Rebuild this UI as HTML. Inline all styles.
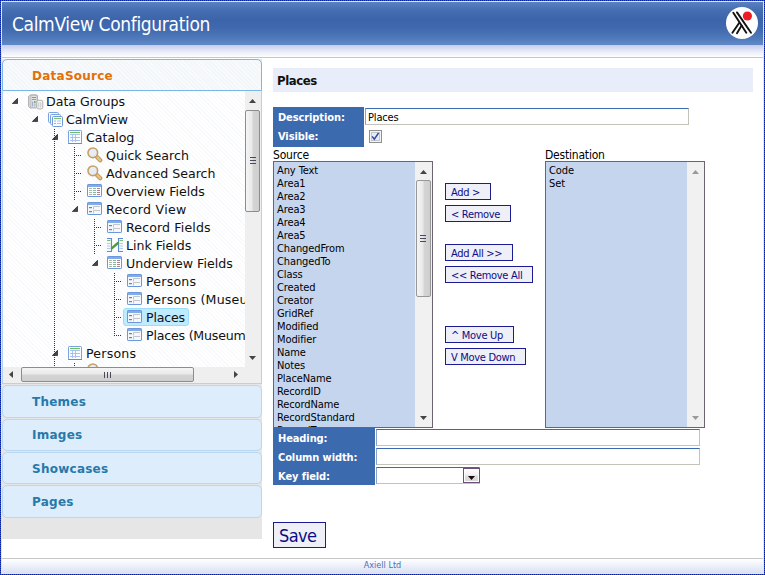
<!DOCTYPE html>
<html><head><meta charset="utf-8"><title>CalmView Configuration</title>
<style>
html,body{margin:0;padding:0;}
body{width:765px;height:575px;position:relative;overflow:hidden;background:#fff;font-family:"DejaVu Sans Condensed","Liberation Sans",sans-serif;font-size:11px;color:#000;}
.abs{position:absolute;}
#fT,#fB{position:absolute;left:0;width:765px;height:1px;background:repeating-linear-gradient(90deg,#0422a0 0,#0422a0 1px,#386a5c 1px,#386a5c 2px);}
#fT{top:0}#fB{top:574px}
#fL,#fR{position:absolute;top:0;width:1px;height:575px;background:repeating-linear-gradient(180deg,#0422a0 0,#0422a0 1px,#386a5c 1px,#386a5c 2px);}
#fL{left:0}#fR{left:764px}
#gT,#gB{position:absolute;left:1px;width:763px;height:1px;background:#e8e6de;}
#gT{top:1px}#gB{top:573px}
#gL,#gR{position:absolute;top:1px;width:1px;height:573px;background:#e8e6de;}
#gL{left:1px}#gR{left:763px}
#hdr{position:absolute;left:2px;top:2px;width:761px;height:43px;background:linear-gradient(180deg,#5a82bf 0%,#466eb2 18%,#3b64aa 42%,#3f68ae 60%,#4f79ba 84%,#5f89c6 100%);}
#title{position:absolute;left:10px;top:10px;color:#fff;font-size:19px;line-height:24px;letter-spacing:-0.35px;white-space:nowrap;}
#sub{position:absolute;left:2px;top:45px;width:761px;height:12px;background:linear-gradient(180deg,#c4cceb 0%,#e6e9f7 50%,#ffffff 100%);}
#subline{position:absolute;left:2px;top:57px;width:761px;height:1px;background:#c6c6c6;}
#left{position:absolute;left:2px;top:58px;width:260px;height:481px;background:linear-gradient(180deg,#fff 0,#fff 1px,#e6e6e6 1px,#e6e6e6 100%);}
.acc{position:absolute;left:0;width:258px;height:30px;border:1px solid #bbd7f0;background:#ddedfb;border-radius:5px;color:#2779aa;font-family:"DejaVu Sans","Liberation Sans",sans-serif;font-weight:bold;font-size:12px;}
.acc span{position:absolute;left:29px;top:9px;line-height:15px;letter-spacing:0.25px;}
#accA{top:1px;border-color:#79b7e7;background:#f4f7f9 repeating-linear-gradient(45deg,rgba(255,255,255,0.55) 0,rgba(255,255,255,0.55) 1px,transparent 1px,transparent 3px);color:#e17009;border-radius:5px 5px 0 0;}
#content{position:absolute;left:0;top:33px;width:258px;height:292px;border:1px solid #b2d2f0;border-top:none;background:#fff repeating-linear-gradient(45deg,rgba(226,234,242,0.28) 0,rgba(226,234,242,0.28) 1px,transparent 1px,transparent 3px);overflow:hidden;}
#tree{position:absolute;left:0;top:0;width:242px;height:276px;overflow:hidden;font-family:"DejaVu Sans","Liberation Sans",sans-serif;font-size:12.6px;}
.tl{position:absolute;height:18px;line-height:18px;white-space:nowrap;color:#111;}
.vd{position:absolute;width:1px;background:repeating-linear-gradient(180deg,#333 0 1px,transparent 1px 2px);}
.hd{position:absolute;height:1px;background:repeating-linear-gradient(90deg,#333 0 1px,transparent 1px 2px);}
.sel{position:absolute;border:1px solid #99defd;background:#beebff;border-radius:3px;}
/* scrollbars */
#vsb{position:absolute;left:242px;top:0;width:16px;height:276px;background:#efefef;}
#vth{position:absolute;left:0px;top:19px;width:13px;height:100px;border:1px solid #8a8f8c;border-radius:2px;background:linear-gradient(90deg,#f5f5f5 0%,#e9e9e9 45%,#d4d4d4 55%,#cfcfcf 100%);}
#hsb{position:absolute;left:0;top:276px;width:242px;height:16px;background:#efefef;}
#hth{position:absolute;left:18px;top:0px;width:171px;height:13px;border:1px solid #8a8f8c;border-radius:2px;background:linear-gradient(180deg,#f5f5f5 0%,#e9e9e9 45%,#d4d4d4 55%,#cfcfcf 100%);}
#corner{position:absolute;left:242px;top:276px;width:16px;height:16px;background:#efefef;}
.grip{position:absolute;}
#ftline{position:absolute;left:2px;top:558px;width:761px;height:1px;background:#c6c6c6;}
#ft{position:absolute;left:2px;top:559px;width:761px;height:14px;background:linear-gradient(180deg,#ffffff 0%,#f0f3fb 40%,#dae1f4 100%);text-align:center;color:#4a70b8;font-size:9px;line-height:12px;}
/* form */
#ph{position:absolute;left:273px;top:68px;width:480px;height:24px;background:#e8edf9;}
#ph span{position:absolute;left:4px;top:5px;font-weight:bold;font-size:13px;line-height:16px;letter-spacing:-0.4px;color:#111;}
.lbl{position:absolute;background:#3c6aae;color:#fff;font-weight:bold;font-size:11px;}
.lbl span{position:absolute;left:5px;line-height:14px;white-space:nowrap;letter-spacing:-0.1px;}
.inp{position:absolute;box-sizing:border-box;height:17px;border:1px solid #c3c3b8;border-top-color:#3c6ab2;border-left-color:#8aa2c8;background:#fff;font-size:11px;line-height:14px;padding:2px 0 0 2px;letter-spacing:-0.15px;overflow:hidden;}
.lb{position:absolute;box-sizing:border-box;border:1px solid #6b6272;background:#c5d5ee;overflow:hidden;padding-top:2px;}
.opt{height:13px;line-height:13px;padding-left:3px;font-size:11px;white-space:nowrap;letter-spacing:-0.1px;}
.lsb{position:absolute;top:0;right:0;width:17px;height:100%;background:#f1f1f1;}
.btn{position:absolute;box-sizing:border-box;height:17px;border:1px solid #1b1b93;background:#eeeff7;color:#0c0c84;font-size:11px;line-height:18px;padding-left:5px;white-space:nowrap;letter-spacing:-0.3px;}
.plain{position:absolute;font-size:12px;line-height:14px;letter-spacing:-0.2px;}
</style></head>
<body>
<div id="hdr"><div id="title">CalmView Configuration</div>
<svg class="abs" style="left:724px;top:5px" width="34" height="34" viewBox="0 0 34 34">
<circle cx="16" cy="16" r="16" fill="#fff"/>
<circle cx="21.4" cy="9" r="4.6" fill="#ee1c25"/>
<g stroke="#111" stroke-width="1.9" stroke-linecap="round" fill="none">
<path d="M7.3 5.8 L20.3 25.7"/><path d="M11 5.4 L25 25.7"/><path d="M6.4 25.8 L13.1 16"/><path d="M11 26.2 L15.6 18.6"/>
</g></svg>
</div>
<div id="sub"></div><div id="subline"></div>

<div id="left">
 <div class="acc" id="accA"><span>DataSource</span></div>
 <div id="content">
  <div id="tree">
<div class="vd" style="left:51px;top:38px;height:271px"></div>
<div class="vd" style="left:71px;top:56px;height:54px"></div>
<div class="vd" style="left:91px;top:128px;height:36px"></div>
<div class="vd" style="left:111px;top:182px;height:63px"></div>
<div class="vd" style="left:71px;top:272px;height:37px"></div>
<div class="hd" style="left:73px;top:64px;width:6px"></div>
<div class="hd" style="left:73px;top:82px;width:6px"></div>
<div class="hd" style="left:73px;top:100px;width:6px"></div>
<div class="hd" style="left:93px;top:136px;width:6px"></div>
<div class="hd" style="left:93px;top:154px;width:6px"></div>
<div class="hd" style="left:113px;top:190px;width:6px"></div>
<div class="hd" style="left:113px;top:208px;width:6px"></div>
<div class="hd" style="left:113px;top:226px;width:6px"></div>
<div class="hd" style="left:113px;top:244px;width:6px"></div>
<div class="hd" style="left:73px;top:280px;width:6px"></div>
<div class="sel" style="left:120px;top:217px;width:64px;height:16px"></div>
<svg class="abs" style="left:24px;top:3px" width="17" height="16" viewBox="0 0 17 16"><path d="M1.5 2.5 L3.5 0.8 L9.5 0.8 L10.5 2 L10.5 12.5 L8.5 14 L3 14 L1.5 12.5 Z" fill="#d2d2d2" stroke="#a4a4a4" stroke-width="0.8"/><rect x="4" y="1.6" width="6" height="12" fill="#e6e6e6" stroke="#b0b0b0" stroke-width="0.6"/><rect x="5" y="3" width="4" height="1" fill="#8f8f8f"/><rect x="5" y="5" width="4" height="1" fill="#9a9a9a"/><rect x="7" y="7.2" width="1.6" height="1.6" fill="#39b54a"/><rect x="5.2" y="7.5" width="1" height="5" fill="#8d8fd0" opacity="0.8"/><rect x="7.4" y="9.5" width="1" height="3" fill="#a9a9c9"/><rect x="9.8" y="6.3" width="6" height="8.6" rx="1.6" fill="#f4f4f4" stroke="#a6a6a6" stroke-width="0.9"/><rect x="11.3" y="8.3" width="1" height="5" fill="#c9c9c9"/><rect x="13.2" y="8.3" width="1" height="5" fill="#c9c9c9"/></svg>
<svg class="abs" style="left:9px;top:7px" width="6" height="6" viewBox="0 0 6 6"><path d="M5.6 0.3 L5.6 5.6 L0.3 5.6 Z" fill="#454545" stroke="#1c1c1c" stroke-width="0.7"/></svg>
<div class="tl" style="left:43px;top:2px">Data Groups</div>
<svg class="abs" style="left:45px;top:21px" width="16" height="16" viewBox="0 0 16 16"><rect x="0.5" y="0.5" width="10" height="10" rx="1" fill="#f3f7fd" stroke="#7ba3e0"/><rect x="2.5" y="2.5" width="10" height="10" rx="1" fill="#f3f7fd" stroke="#7ba3e0"/><rect x="4.5" y="4.5" width="10" height="10" rx="1" fill="#fbfcff" stroke="#6f9bdc"/><rect x="6" y="6" width="7" height="1" fill="#7cc26a"/><rect x="6" y="8.5" width="2" height="1" fill="#8fb2e8"/><rect x="9" y="8.5" width="4" height="1" fill="#a9c4ee"/><rect x="6" y="11" width="2" height="1" fill="#8fb2e8"/><rect x="9" y="11" width="4" height="1" fill="#a9c4ee"/></svg>
<svg class="abs" style="left:29px;top:25px" width="6" height="6" viewBox="0 0 6 6"><path d="M5.6 0.3 L5.6 5.6 L0.3 5.6 Z" fill="#454545" stroke="#1c1c1c" stroke-width="0.7"/></svg>
<div class="tl" style="left:63px;top:20px">CalmView</div>
<svg class="abs" style="left:65px;top:39px" width="14" height="14" viewBox="0 0 14 14"><rect x="0.5" y="0.5" width="13" height="13" rx="0.8" fill="#fbfcff" stroke="#7aa3e2"/><rect x="2" y="2" width="10" height="1" fill="#6fbf5c"/><path d="M2 4.5H12M2 7.5H12M2 10.5H12" stroke="#a9c3f0" stroke-width="1" fill="none"/><path d="M4.5 4V12M7.5 4V12" stroke="#a9c3f0" stroke-width="1" fill="none"/><rect x="0" y="13" width="14" height="1" fill="#5f8fda"/></svg>
<svg class="abs" style="left:49px;top:43px" width="6" height="6" viewBox="0 0 6 6"><path d="M5.6 0.3 L5.6 5.6 L0.3 5.6 Z" fill="#454545" stroke="#1c1c1c" stroke-width="0.7"/></svg>
<div class="tl" style="left:83px;top:38px">Catalog</div>
<svg class="abs" style="left:84px;top:56px" width="16" height="16" viewBox="0 0 16 16"><path d="M10.2 10.2 L13.2 13.2" stroke="#c39555" stroke-width="4.2" stroke-linecap="round"/><path d="M10.4 10.4 L13.1 13.1" stroke="#e3c493" stroke-width="2.2" stroke-linecap="round"/><circle cx="5.8" cy="5.8" r="4.8" fill="#e2eaf7" stroke="#c9a063" stroke-width="1.6"/><circle cx="5.8" cy="5.8" r="3.4" fill="#e6edf8"/></svg>
<div class="tl" style="left:103px;top:56px">Quick Search</div>
<svg class="abs" style="left:84px;top:74px" width="16" height="16" viewBox="0 0 16 16"><path d="M10.2 10.2 L13.2 13.2" stroke="#c39555" stroke-width="4.2" stroke-linecap="round"/><path d="M10.4 10.4 L13.1 13.1" stroke="#e3c493" stroke-width="2.2" stroke-linecap="round"/><circle cx="5.8" cy="5.8" r="4.8" fill="#e2eaf7" stroke="#c9a063" stroke-width="1.6"/><circle cx="5.8" cy="5.8" r="3.4" fill="#e6edf8"/></svg>
<div class="tl" style="left:103px;top:74px">Advanced Search</div>
<svg class="abs" style="left:84px;top:93px" width="15" height="13" viewBox="0 0 15 13"><rect x="0.5" y="0.5" width="14" height="12" rx="0.6" fill="#ffffff" stroke="#6b97db"/><rect x="1" y="1" width="13" height="2" fill="#82abe8"/><rect x="2" y="4" width="3" height="1" fill="#aab8a6"/><rect x="6" y="4" width="3" height="1" fill="#8fb89a"/><rect x="10" y="4" width="3" height="1" fill="#a8868e"/><rect x="2" y="6" width="3" height="1" fill="#aab8a6"/><rect x="6" y="6" width="3" height="1" fill="#8fb89a"/><rect x="10" y="6" width="3" height="1" fill="#a8868e"/><rect x="2" y="8" width="3" height="1" fill="#aab8a6"/><rect x="6" y="8" width="3" height="1" fill="#8fb89a"/><rect x="10" y="8" width="3" height="1" fill="#a8868e"/><rect x="2" y="10" width="3" height="1" fill="#aab8a6"/><rect x="6" y="10" width="3" height="1" fill="#8fb89a"/><rect x="10" y="10" width="3" height="1" fill="#a8868e"/></svg>
<div class="tl" style="left:103px;top:92px">Overview Fields</div>
<svg class="abs" style="left:84px;top:111px" width="15" height="13" viewBox="0 0 15 13"><rect x="0.5" y="0.5" width="14" height="12" rx="0.6" fill="#f6f7f9" stroke="#6b97db"/><rect x="1" y="1" width="13" height="2" fill="#82abe8"/><rect x="2" y="5" width="3" height="1.2" fill="#4f86e0"/><rect x="2" y="9" width="3" height="1.2" fill="#4f86e0"/><path d="M6.5 7.5V4.5H13M6.5 11.5V8.5H13" stroke="#c2c6cc" stroke-width="1" fill="none"/></svg>
<svg class="abs" style="left:69px;top:115px" width="6" height="6" viewBox="0 0 6 6"><path d="M5.6 0.3 L5.6 5.6 L0.3 5.6 Z" fill="#454545" stroke="#1c1c1c" stroke-width="0.7"/></svg>
<div class="tl" style="left:103px;top:110px;letter-spacing:0.3px">Record View</div>
<svg class="abs" style="left:104px;top:129px" width="15" height="13" viewBox="0 0 15 13"><rect x="0.5" y="0.5" width="14" height="12" rx="0.6" fill="#f6f7f9" stroke="#6b97db"/><rect x="1" y="1" width="13" height="2" fill="#82abe8"/><rect x="2" y="5" width="3" height="1.2" fill="#4f86e0"/><rect x="2" y="9" width="3" height="1.2" fill="#4f86e0"/><path d="M6.5 7.5V4.5H13M6.5 11.5V8.5H13" stroke="#c2c6cc" stroke-width="1" fill="none"/></svg>
<div class="tl" style="left:123px;top:128px;letter-spacing:0.12px">Record Fields</div>
<svg class="abs" style="left:104px;top:147px" width="16" height="14" viewBox="0 0 16 14"><path d="M0 0.5H4.5V13.5H0" fill="#f5f8fe" stroke="#5a8ad8" stroke-width="1.1"/><path d="M16 0.5H11.5V13.5H16" fill="#f5f8fe" stroke="#5a8ad8" stroke-width="1.1"/><rect x="0" y="2" width="3.5" height="1" fill="#79c267"/><rect x="12.5" y="2" width="3.5" height="1" fill="#79c267"/><path d="M0 5.5H3.5M0 8H3.5M0 10.5H3.5M12.5 5.5H16M12.5 8H16M12.5 10.5H16" stroke="#b5cbf0" stroke-width="1"/><path d="M5 10.2 L11 5" stroke="#4f9c3c" stroke-width="2.4" stroke-linecap="round"/></svg>
<div class="tl" style="left:123px;top:146px">Link Fields</div>
<svg class="abs" style="left:104px;top:165px" width="15" height="13" viewBox="0 0 15 13"><rect x="0.5" y="0.5" width="14" height="12" rx="0.6" fill="#ffffff" stroke="#6b97db"/><rect x="1" y="1" width="13" height="2" fill="#82abe8"/><rect x="2" y="4" width="3" height="1" fill="#aab8a6"/><rect x="6" y="4" width="3" height="1" fill="#8fb89a"/><rect x="10" y="4" width="3" height="1" fill="#a8868e"/><rect x="2" y="6" width="3" height="1" fill="#aab8a6"/><rect x="6" y="6" width="3" height="1" fill="#8fb89a"/><rect x="10" y="6" width="3" height="1" fill="#a8868e"/><rect x="2" y="8" width="3" height="1" fill="#aab8a6"/><rect x="6" y="8" width="3" height="1" fill="#8fb89a"/><rect x="10" y="8" width="3" height="1" fill="#a8868e"/><rect x="2" y="10" width="3" height="1" fill="#aab8a6"/><rect x="6" y="10" width="3" height="1" fill="#8fb89a"/><rect x="10" y="10" width="3" height="1" fill="#a8868e"/></svg>
<svg class="abs" style="left:89px;top:169px" width="6" height="6" viewBox="0 0 6 6"><path d="M5.6 0.3 L5.6 5.6 L0.3 5.6 Z" fill="#454545" stroke="#1c1c1c" stroke-width="0.7"/></svg>
<div class="tl" style="left:123px;top:164px">Underview Fields</div>
<svg class="abs" style="left:124px;top:183px" width="15" height="13" viewBox="0 0 15 13"><rect x="0.5" y="0.5" width="14" height="12" rx="0.6" fill="#f6f7f9" stroke="#6b97db"/><rect x="1" y="1" width="13" height="2" fill="#82abe8"/><rect x="2" y="5" width="3" height="1.2" fill="#4f86e0"/><rect x="2" y="9" width="3" height="1.2" fill="#4f86e0"/><path d="M6.5 7.5V4.5H13M6.5 11.5V8.5H13" stroke="#c2c6cc" stroke-width="1" fill="none"/></svg>
<div class="tl" style="left:143px;top:182px;letter-spacing:0.2px">Persons</div>
<svg class="abs" style="left:124px;top:201px" width="15" height="13" viewBox="0 0 15 13"><rect x="0.5" y="0.5" width="14" height="12" rx="0.6" fill="#f6f7f9" stroke="#6b97db"/><rect x="1" y="1" width="13" height="2" fill="#82abe8"/><rect x="2" y="5" width="3" height="1.2" fill="#4f86e0"/><rect x="2" y="9" width="3" height="1.2" fill="#4f86e0"/><path d="M6.5 7.5V4.5H13M6.5 11.5V8.5H13" stroke="#c2c6cc" stroke-width="1" fill="none"/></svg>
<div class="tl" style="left:143px;top:200px;letter-spacing:0.2px">Persons (Museum)</div>
<svg class="abs" style="left:124px;top:219px" width="15" height="13" viewBox="0 0 15 13"><rect x="0.5" y="0.5" width="14" height="12" rx="0.6" fill="#f6f7f9" stroke="#6b97db"/><rect x="1" y="1" width="13" height="2" fill="#82abe8"/><rect x="2" y="5" width="3" height="1.2" fill="#4f86e0"/><rect x="2" y="9" width="3" height="1.2" fill="#4f86e0"/><path d="M6.5 7.5V4.5H13M6.5 11.5V8.5H13" stroke="#c2c6cc" stroke-width="1" fill="none"/></svg>
<div class="tl" style="left:143px;top:218px;letter-spacing:-0.2px">Places</div>
<svg class="abs" style="left:124px;top:237px" width="15" height="13" viewBox="0 0 15 13"><rect x="0.5" y="0.5" width="14" height="12" rx="0.6" fill="#f6f7f9" stroke="#6b97db"/><rect x="1" y="1" width="13" height="2" fill="#82abe8"/><rect x="2" y="5" width="3" height="1.2" fill="#4f86e0"/><rect x="2" y="9" width="3" height="1.2" fill="#4f86e0"/><path d="M6.5 7.5V4.5H13M6.5 11.5V8.5H13" stroke="#c2c6cc" stroke-width="1" fill="none"/></svg>
<div class="tl" style="left:143px;top:236px;letter-spacing:-0.2px">Places (Museum)</div>
<svg class="abs" style="left:65px;top:255px" width="14" height="14" viewBox="0 0 14 14"><rect x="0.5" y="0.5" width="13" height="13" rx="0.8" fill="#fbfcff" stroke="#7aa3e2"/><rect x="2" y="2" width="10" height="1" fill="#6fbf5c"/><path d="M2 4.5H12M2 7.5H12M2 10.5H12" stroke="#a9c3f0" stroke-width="1" fill="none"/><path d="M4.5 4V12M7.5 4V12" stroke="#a9c3f0" stroke-width="1" fill="none"/><rect x="0" y="13" width="14" height="1" fill="#5f8fda"/></svg>
<svg class="abs" style="left:49px;top:259px" width="6" height="6" viewBox="0 0 6 6"><path d="M5.6 0.3 L5.6 5.6 L0.3 5.6 Z" fill="#454545" stroke="#1c1c1c" stroke-width="0.7"/></svg>
<div class="tl" style="left:83px;top:254px;letter-spacing:0.2px">Persons</div>
<svg class="abs" style="left:84px;top:272px" width="16" height="16" viewBox="0 0 16 16"><path d="M10.2 10.2 L13.2 13.2" stroke="#c39555" stroke-width="4.2" stroke-linecap="round"/><path d="M10.4 10.4 L13.1 13.1" stroke="#e3c493" stroke-width="2.2" stroke-linecap="round"/><circle cx="5.8" cy="5.8" r="4.8" fill="#e2eaf7" stroke="#c9a063" stroke-width="1.6"/><circle cx="5.8" cy="5.8" r="3.4" fill="#e6edf8"/></svg>
  </div>
  <div id="vsb"><svg class="abs" style="left:4px;top:8px" width="7" height="4"><path d="M0 4 L3.5 0 L7 4 Z" fill="#444"/></svg><div id="vth"><svg class="abs" style="left:4px;top:46px" width="6" height="8"><path d="M0 0.5H6M0 3.5H6M0 6.5H6" stroke="#4a4a5a" stroke-width="1"/></svg></div><svg class="abs" style="left:4px;top:265px" width="7" height="4"><path d="M0 0 L3.5 4 L7 0 Z" fill="#444"/></svg></div>
  <div id="hsb"><svg class="abs" style="left:6px;top:4px" width="4" height="7"><path d="M4 0 L0 3.5 L4 7 Z" fill="#444"/></svg><div id="hth"><svg class="abs" style="left:82px;top:4px" width="8" height="6"><path d="M0.5 0V6M3.5 0V6M6.5 0V6" stroke="#4a4a5a" stroke-width="1"/></svg></div><svg class="abs" style="left:231px;top:4px" width="4" height="7"><path d="M0 0 L4 3.5 L0 7 Z" fill="#444"/></svg></div>
  <div id="corner"></div>
 </div>
 <div class="acc" style="top:327px;height:31px"><span>Themes</span></div>
 <div class="acc" style="top:361px"><span style="top:8px">Images</span></div>
 <div class="acc" style="top:394px"><span>Showcases</span></div>
 <div class="acc" style="top:427px;height:31px"><span>Pages</span></div>
</div>

<div id="ph"><span>Places</span></div>
<div class="lbl" style="left:273px;top:107px;width:91px;height:40px"><span style="top:4px">Description:</span><span style="top:23px">Visible:</span></div>
<div class="inp" style="left:365px;top:108px;width:324px">Places</div>
<svg class="abs" style="left:369px;top:130px" width="13" height="13" viewBox="0 0 13 13"><rect x="0.5" y="0.5" width="12" height="12" fill="#f4f4f4" stroke="#8e8f8f"/><rect x="2.5" y="2.5" width="8" height="8" fill="#e9ecf1" stroke="#c0c6cf"/><path d="M3.2 6.4 L5.3 9.2 L9.6 2.8" stroke="#3346a0" stroke-width="1.5" fill="none"/></svg>
<div class="plain" style="left:273px;top:148px">Source</div>
<div class="plain" style="left:545px;top:148px">Destination</div>
<div class="lb" style="left:273px;top:161px;width:160px;height:267px"><div class="opt">Any Text</div><div class="opt">Area1</div><div class="opt">Area2</div><div class="opt">Area3</div><div class="opt">Area4</div><div class="opt">Area5</div><div class="opt">ChangedFrom</div><div class="opt">ChangedTo</div><div class="opt">Class</div><div class="opt">Created</div><div class="opt">Creator</div><div class="opt">GridRef</div><div class="opt">Modified</div><div class="opt">Modifier</div><div class="opt">Name</div><div class="opt">Notes</div><div class="opt">PlaceName</div><div class="opt">RecordID</div><div class="opt">RecordName</div><div class="opt">RecordStandard</div><div class="opt">RecordType</div><div class="opt">Region</div><div class="opt">Type</div>
 <div class="lsb"><svg class="abs" style="left:5px;top:8px" width="7" height="4"><path d="M0 4 L3.5 0 L7 4 Z" fill="#444"/></svg><div class="abs" style="left:1px;top:18px;width:13px;height:115px;border:1px solid #979797;border-radius:2px;background:linear-gradient(90deg,#f5f5f5 0%,#e9e9e9 45%,#d4d4d4 55%,#cfcfcf 100%)"><svg class="abs" style="left:3px;top:54px" width="6" height="8"><path d="M0 0.5H6M0 3.5H6M0 6.5H6" stroke="#4a4a5a" stroke-width="1"/></svg></div><svg class="abs" style="left:5px;top:254px" width="7" height="4"><path d="M0 0 L3.5 4 L7 0 Z" fill="#444"/></svg></div>
</div>
<div class="lb" style="left:545px;top:161px;width:160px;height:267px"><div class="opt">Code</div><div class="opt">Set</div>
 <div class="lsb"><svg class="abs" style="left:5px;top:8px" width="7" height="4"><path d="M0 4 L3.5 0 L7 4 Z" fill="#999"/></svg><svg class="abs" style="left:5px;top:254px" width="7" height="4"><path d="M0 0 L3.5 4 L7 0 Z" fill="#999"/></svg></div>
</div>
<div class="btn" style="left:445px;top:183px;width:46px">Add &gt;</div>
<div class="btn" style="left:445px;top:205px;width:66px">&lt; Remove</div>
<div class="btn" style="left:445px;top:244px;width:68px">Add All &gt;&gt;</div>
<div class="btn" style="left:445px;top:266px;width:88px">&lt;&lt; Remove All</div>
<div class="btn" style="left:445px;top:326px;width:69px">^ Move Up</div>
<div class="btn" style="left:445px;top:348px;width:81px">V Move Down</div>

<div class="lbl" style="left:273px;top:428px;width:102px;height:57px"><span style="top:4px">Heading:</span><span style="top:23px">Column width:</span><span style="top:42px">Key field:</span></div>
<div class="inp" style="left:376px;top:429px;width:324px"></div>
<div class="inp" style="left:376px;top:448px;width:324px"></div>
<div class="inp" style="left:376px;top:467px;width:104px;padding:0;overflow:visible"><div class="abs" style="right:-1px;top:0px;width:17px;height:15px;border:1px solid #6b5078;box-sizing:border-box;background:linear-gradient(180deg,#fdfdfd 0%,#f1f1f1 48%,#dcdcdc 52%,#d8d8d8 100%);box-shadow:inset 0 0 0 1px #fff"><svg class="abs" style="left:4px;top:7px" width="7" height="4"><path d="M0 0 L3.5 4 L7 0 Z" fill="#1a0a0a"/></svg></div></div>
<div class="btn" style="left:273px;top:522px;width:53px;height:26px;font-size:18px;line-height:25px;padding-left:5px;letter-spacing:-0.6px">Save</div>

<div id="ftline"></div><div id="ft">Axiell Ltd</div>
<div id="gT"></div><div id="gB"></div><div id="gL"></div><div id="gR"></div>
<div id="fT"></div><div id="fB"></div><div id="fL"></div><div id="fR"></div>
</body></html>
